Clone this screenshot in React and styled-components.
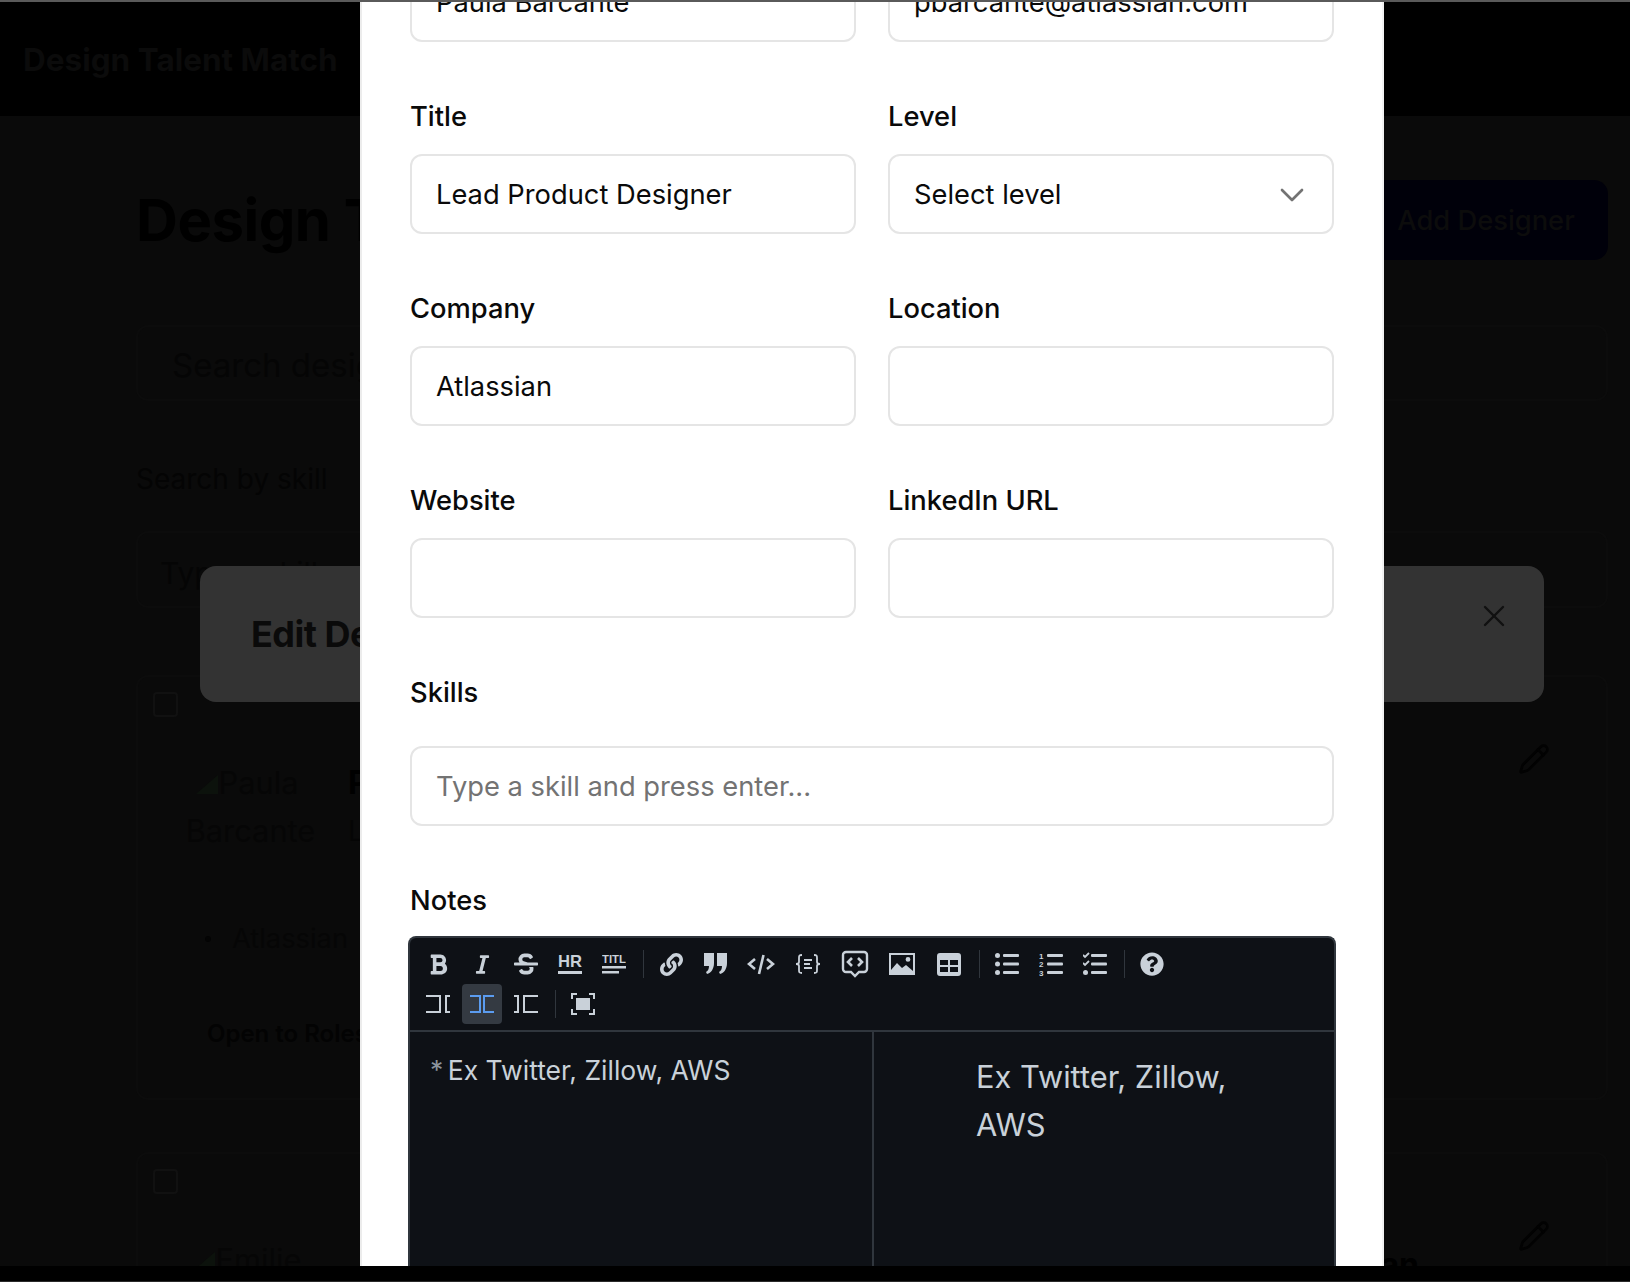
import styled, { createGlobalStyle } from "styled-components";
import { ChevronDown, Pencil, X } from "lucide-react";
import { FaBold, FaItalic, FaStrikethrough, FaLink, FaQuestionCircle } from "react-icons/fa";

const GlobalStyle = createGlobalStyle`
    * { box-sizing: border-box; }
    html, body { margin: 0; height: 100%; overflow: hidden; background: #000; }
    body { font-family: Inter, "Liberation Sans", sans-serif; }
`;

const Frame = styled.div`
    display: flex;
    flex-direction: column;
    height: 1282px;
    border-top: 2px solid #5a5a5a;
    border-bottom: 1px solid #2a2a2a;
`;

const Viewport = styled.div`
    position: relative;
    flex: 1;
    overflow: hidden;
    background: #0a0a0a;
`;

const BottomBar = styled.div`
    height: 15px;
    background: #000;
`;

const Header = styled.header`
    height: 114px;
    display: flex;
    align-items: center;
    padding: 0 23px;
    background: #000;
`;

const Brand = styled.div`
    font-size: 31.5px;
    font-weight: 700;
    color: #0b0b0b;
`;

const Main = styled.main`
    padding: 64px 22px 0 136px;
`;

const TitleRow = styled.div`
    display: flex;
    justify-content: space-between;
    align-items: center;
    height: 80px;
`;

const PageTitle = styled.h1`
    margin: 0;
    font-size: 58px;
    font-weight: 700;
    letter-spacing: -0.5px;
    color: #000;
`;

const AddButton = styled.button`
    height: 80px;
    width: 244px;
    border: 0;
    border-radius: 14px;
    font: 500 27.3px Inter, sans-serif;
    color: #0c0c0c;
    background: #00000a;
`;

const SearchBox = styled.div`
    height: 76px;
    margin-top: 65px;
    padding: 4px 0 0 34px;
    display: flex;
    align-items: center;
    border: 2px solid #0c0c0c;
    border-radius: 12px;
    font-size: 33px;
    color: #050505;
`;

const SkillLabel = styled.div`
    margin-top: 61px;
    font-size: 28px;
    line-height: 34px;
    color: #040404;
`;

const SkillBox = styled.div`
    height: 77px;
    margin-top: 35px;
    padding: 22px 0 0 22px;
    border: 2px solid #0c0c0c;
    border-radius: 12px;
    font-size: 30px;
    color: #050505;
`;

const Card = styled.section`
    position: relative;
    height: ${props => props.$height}px;
    margin-top: ${props => props.$top}px;
    padding: 15px 0 0 15px;
    border: 2px solid #0c0c0c;
    border-radius: 12px;
`;

const Checkbox = styled.div`
    width: 25px;
    height: 25px;
    border: 2px solid #111;
    border-radius: 4px;
`;

const CardBody = styled.div`
    display: flex;
    margin-top: 42px;
`;

const Avatar = styled.div`
    flex: none;
    width: 153px;
    margin-left: 21px;
    text-align: center;
    font-size: 30.8px;
    line-height: 48px;
    color: #060606;
`;

const BrokenImage = styled.svg`
    width: 24px;
    height: 24px;
    margin-left: -8px;
    vertical-align: -2px;
`;

const Person = styled.div`
    width: ${props => props.$width || "auto"};
    margin-left: 21px;
    padding-top: ${props => props.$end ? 5 : 0}px;
    text-align: ${props => props.$end ? "right" : "left"};
    font-size: 32px;
    line-height: 48px;
    font-weight: 700;
    color: #000;
`;

const PersonRole = styled.div`
    font-size: 28px;
    font-weight: 400;
    color: #050505;
`;

const Company = styled.div`
    margin: 67px 0 0 52px;
    font-size: 27.3px;
    line-height: 34px;
    color: #060606;
    display: flex;
    align-items: center;
    gap: 21px;

    &::before {
        content: "";
        width: 6px;
        height: 6px;
        border-radius: 50%;
        background: #040404;
    }
`;

const RoleTag = styled.div`
    margin: 63px 0 0 54px;
    font-size: 24px;
    line-height: 30px;
    font-weight: 600;
    color: #030303;
`;

const EditLink = styled.div`
    position: absolute;
    top: 66px;
    right: 56px;
    color: #020202;
`;

const HeaderBar = styled.div`
    position: absolute;
    top: 564px;
    left: 200px;
    width: 1344px;
    height: 136px;
    padding-left: 51px;
    display: flex;
    align-items: center;
    justify-content: space-between;
    background: #333;
    border-radius: 16px;
`;

const HeaderTitle = styled.h2`
    margin: 0;
    font-size: 36px;
    font-weight: 700;
    letter-spacing: -0.5px;
    color: #0a0a0a;
`;

const CloseButton = styled.div`
    display: flex;
    align-self: flex-start;
    margin: 32px 32px 0 0;
    color: #111;
`;

const Panel = styled.div`
    position: absolute;
    top: 0;
    bottom: 0;
    left: 360px;
    width: 1024px;
    overflow: hidden;
    padding: 0 48px;
    background: #fff;
    border-left: 2px solid #ececec;
    border-right: 2px solid #f2f2f2;
`;

/* the dialog is scrolled: this is its scroll offset */
const Form = styled.form`
    margin-top: -98px;
    display: grid;
    grid-template-columns: 446px 446px;
    column-gap: 32px;
    row-gap: 54px;
`;

const Field = styled.div`
    display: flex;
    flex-direction: column;
    grid-column: ${props => props.$wide ? "1 / -1" : "auto"};
`;

const Label = styled.label`
    height: 41px;
    margin-bottom: ${props => props.$gap || 17}px;
    font-size: 27.3px;
    line-height: 41px;
    font-weight: 500;
    color: #0a0a0a;
`;

const Input = styled.div`
    height: 80px;
    padding: 1px 24px 0;
    display: flex;
    align-items: center;
    justify-content: space-between;
    border: 2px solid #e5e5e5;
    border-radius: 12px;
    font-size: 27.3px;
    color: ${props => props.$placeholder ? "#737373" : "#0a0a0a"};
`;

const Chevron = styled(ChevronDown)`
    color: #737373;
    margin-right: -4px;
`;

const Editor = styled.div`
    margin: 0 -2px;
    height: 420px;
    background: #0e1116;
    border: 2px solid #30363d;
    border-bottom: 0;
    border-radius: 8px 8px 0 0;
    color: #c9d1d9;
`;

const Toolbar = styled.div`
    padding: 6px 8px;
    height: 94px;
    display: flex;
    flex-direction: column;
    border-bottom: 2px solid #30363d;
`;

const ToolRow = styled.div`
    display: flex;
    gap: 4px;
`;

const ToolButton = styled.div`
    width: ${props => props.$wide ? 43 : 40}px;
    height: 40px;
    display: flex;
    align-items: center;
    justify-content: center;
    border-radius: 4px;
    color: ${props => props.$active ? "#5b9cf0" : "#c9d1d9"};
    background: ${props => props.$active ? "#343a42" : "transparent"};
`;

const ToolDivider = styled.div`
    width: 1px;
    height: 28px;
    margin: 6px 3px 0 5px;
    background: #30363d;
`;

const Panes = styled.div`
    display: grid;
    grid-template-columns: 464px 1fr;
`;

const Source = styled.div`
    height: 300px;
    padding: 18px 20px;
    border-right: 2px solid #30363d;
    font-size: 26.5px;
    line-height: 40px;
`;

const Asterisk = styled.span`
    margin-right: -3px;
    color: #8b949e;
`;

const Preview = styled.ul`
    margin: 0;
    padding: 21px 70px 0 102px;
    list-style: none;
    font-size: 30.8px;
    line-height: 48px;
`;

const Glyph = ({ children, w = 24, h = 24 }) => (
    <svg width={w} height={h} viewBox={`0 0 ${w} ${h}`} fill="none" stroke="currentColor" strokeWidth="2">
        {children}
    </svg>
);

const HrIcon = () => (
    <Glyph>
        <text x="0" y="15" fontFamily="Liberation Sans" fontWeight="700" fontSize="17" textLength="24" lengthAdjust="spacingAndGlyphs" fill="currentColor" stroke="none">HR</text>
        <rect x="0" y="19" width="24" height="3" fill="currentColor" stroke="none" />
    </Glyph>
);

const TitleIcon = () => (
    <Glyph>
        <text x="0" y="11" fontFamily="Liberation Sans" fontWeight="700" fontSize="11" textLength="24" lengthAdjust="spacingAndGlyphs" fill="currentColor" stroke="none">TITL</text>
        <rect x="0" y="14" width="24" height="2.5" fill="currentColor" stroke="none" />
        <rect x="0" y="19" width="17" height="2.5" fill="currentColor" stroke="none" />
    </Glyph>
);

const QuoteIcon = () => (
    <Glyph>
        <g fill="currentColor" stroke="none">
            <path d="M1 1h10v10c0 6-3 10-7 11l-1-2c2-1 3-3 3-6H1z" />
            <path d="M14 1h10v10c0 6-3 10-7 11l-1-2c2-1 3-3 3-6h-5z" />
        </g>
    </Glyph>
);

const CodeIcon = () => (
    <Glyph w={28} h={24}>
        <path d="M8 7l-6 5 6 5M20 7l6 5-6 5" strokeWidth="2.6" />
        <path d="M16.5 3l-4.5 19" strokeWidth="2.6" />
    </Glyph>
);

const BlockIcon = () => (
    <Glyph w={26} h={24}>
        <path d="M7 3c-3 0-3 1-3 3v4c0 1-1 2-3 2 2 0 3 1 3 2v4c0 2 0 3 3 3M19 3c3 0 3 1 3 3v4c0 1 1 2 3 2-2 0-3 1-3 2v4c0 2 0 3-3 3" strokeWidth="1.8" />
        <path d="M9 8h8M9 12h6M9 16h8" strokeWidth="1.8" />
    </Glyph>
);

const CommentIcon = () => (
    <Glyph w={28} h={28}>
        <path d="M5 2h18a3 3 0 0 1 3 3v14a3 3 0 0 1-3 3h-5l-4 4-4-4H5a3 3 0 0 1-3-3V5a3 3 0 0 1 3-3z" strokeWidth="2.4" />
        <path d="M11 8l-4 4 4 4M17 8l4 4-4 4" strokeWidth="2.6" />
    </Glyph>
);

const ImageIcon = () => (
    <Glyph w={26} h={24}>
        <path fill="currentColor" stroke="none" fillRule="evenodd" d="M0 1h26v22H0zM2 3v15l6-7 5 5 4-3 7 6V3zM19 5a2.4 2.4 0 1 1 0 4.8A2.4 2.4 0 0 1 19 5z" />
    </Glyph>
);

const TableIcon = () => (
    <Glyph>
        <path fill="currentColor" stroke="none" fillRule="evenodd" d="M3 1h18a3 3 0 0 1 3 3v17a3 3 0 0 1-3 3H3a3 3 0 0 1-3-3V4a3 3 0 0 1 3-3zM3 8v5h8V8zm10 0v5h8V8zM3 15v5h8v-5zm10 0v5h8v-5z" />
    </Glyph>
);

const ListLines = () => (
    <g fill="currentColor" stroke="none">
        <rect x="8" y="2" width="16" height="3" rx="1" />
        <rect x="8" y="10.5" width="16" height="3" rx="1" />
        <rect x="8" y="19" width="16" height="3" rx="1" />
    </g>
);

const BulletIcon = () => (
    <Glyph>
        <ListLines />
        <g fill="currentColor" stroke="none">
            <circle cx="2.5" cy="3.5" r="2.5" />
            <circle cx="2.5" cy="12" r="2.5" />
            <circle cx="2.5" cy="20.5" r="2.5" />
        </g>
    </Glyph>
);

const OrderedIcon = () => (
    <Glyph>
        <ListLines />
        <g fontFamily="Liberation Sans" fontWeight="700" fontSize="8" fill="currentColor" stroke="none">
            <text x="0" y="7">1</text>
            <text x="0" y="15">2</text>
            <text x="0" y="24">3</text>
        </g>
    </Glyph>
);

const TaskIcon = () => (
    <Glyph>
        <ListLines />
        <path d="M0 3l2 2 4-4M0 11l2 2 4-4" strokeWidth="1.8" />
        <circle cx="2.5" cy="20.5" r="2.5" fill="currentColor" stroke="none" />
    </Glyph>
);

const EditModeIcon = () => (
    <Glyph>
        <path d="M0 4h14v16H0M24 4h-4v16h4" />
    </Glyph>
);

const LiveModeIcon = () => (
    <Glyph>
        <path d="M0 4h10v16H0M24 4H14v16h10" />
    </Glyph>
);

const PreviewModeIcon = () => (
    <Glyph>
        <path d="M24 4H10v16h14M0 4h4v16H0" />
    </Glyph>
);

const FullscreenIcon = () => (
    <Glyph>
        <path d="M1 7V2h5M18 2h5v5M23 17v5h-5M6 22H1v-5" strokeWidth="2" />
        <rect x="5" y="6" width="14" height="12" fill="currentColor" stroke="none" />
    </Glyph>
);

const firstRow = [
    { icon: <FaBold size={23} /> }, { icon: <FaItalic size={21} /> }, { icon: <FaStrikethrough size={24} /> },
    { icon: <HrIcon /> }, { icon: <TitleIcon /> }, null,
    { icon: <FaLink size={23} /> }, { icon: <QuoteIcon /> }, { icon: <CodeIcon />, wide: true },
    { icon: <BlockIcon />, wide: true }, { icon: <CommentIcon />, wide: true }, { icon: <ImageIcon />, wide: true },
    { icon: <TableIcon />, wide: true }, null,
    { icon: <BulletIcon /> }, { icon: <OrderedIcon /> }, { icon: <TaskIcon /> }, null,
    { icon: <FaQuestionCircle size={24} /> },
];

const fields = [
    { label: "Name", value: "Paula Barcante" },
    { label: "Email", value: "pbarcante@atlassian.com" },
    { label: "Title", value: "Lead Product Designer" },
    { label: "Level", value: "Select level", select: true },
    { label: "Company", value: "Atlassian" },
    { label: "Location", value: "" },
    { label: "Website", value: "" },
    { label: "LinkedIn URL", value: "" },
];

function Background() {
    return (
        <>
            <Header>
                <Brand>Design Talent Match</Brand>
            </Header>
            <Main>
                <TitleRow>
                    <PageTitle>Design Talent</PageTitle>
                    <AddButton>Add Designer</AddButton>
                </TitleRow>
                <SearchBox>Search designers...</SearchBox>
                <SkillLabel>Search by skill</SkillLabel>
                <SkillBox>Type a skill...</SkillBox>
                <Card $top={67} $height={425}>
                    <Checkbox />
                    <EditLink><Pencil size={32} strokeWidth={2} /></EditLink>
                    <CardBody>
                        <Avatar>
                            <BrokenImage viewBox="0 0 24 24"><path d="M1 22 23 3v19z" fill="#0c120c" /></BrokenImage>
                            Paula Barcante
                        </Avatar>
                        <Person>
                            Paula Barcante
                            <PersonRole>Lead Product Designer</PersonRole>
                        </Person>
                    </CardBody>
                    <Company>Atlassian</Company>
                    <RoleTag>Open to Roles</RoleTag>
                </Card>
                <Card $top={52} $height={400}>
                    <Checkbox />
                    <EditLink><Pencil size={32} strokeWidth={2} /></EditLink>
                    <CardBody>
                        <Avatar>
                            <BrokenImage viewBox="0 0 24 24"><path d="M1 22 23 3v19z" fill="#0c120c" /></BrokenImage>
                            Emilie
                        </Avatar>
                        <Person $width="1071px" $end>Emilie Sullivan</Person>
                    </CardBody>
                </Card>
            </Main>
        </>
    );
}

function NotesEditor() {
    return (
        <Editor>
            <Toolbar>
                <ToolRow>
                    {firstRow.map((tool, i) => tool
                        ? <ToolButton key={i} $wide={tool.wide}>{tool.icon}</ToolButton>
                        : <ToolDivider key={i} />)}
                </ToolRow>
                <ToolRow>
                    <ToolButton><EditModeIcon /></ToolButton>
                    <ToolButton $active><LiveModeIcon /></ToolButton>
                    <ToolButton><PreviewModeIcon /></ToolButton>
                    <ToolDivider />
                    <ToolButton><FullscreenIcon /></ToolButton>
                </ToolRow>
            </Toolbar>
            <Panes>
                <Source><Asterisk>*</Asterisk> Ex Twitter, Zillow, AWS</Source>
                <Preview>
                    <li>Ex Twitter, Zillow, AWS</li>
                </Preview>
            </Panes>
        </Editor>
    );
}

function App() {
    return (
        <Frame>
            <GlobalStyle />
            <Viewport>
                <Background />
                <HeaderBar>
                    <HeaderTitle>Edit Designer</HeaderTitle>
                    <CloseButton><X size={36} strokeWidth={1.6} /></CloseButton>
                </HeaderBar>
                <Panel>
                    <Form>
                        {fields.map(field => (
                            <Field key={field.label}>
                                <Label>{field.label}</Label>
                                <Input>
                                    {field.value}
                                    {field.select && <Chevron size={40} strokeWidth={1.6} />}
                                </Input>
                            </Field>
                        ))}
                        <Field $wide>
                            <Label $gap={33}>Skills</Label>
                            <Input $placeholder>Type a skill and press enter...</Input>
                        </Field>
                        <Field $wide>
                            <Label $gap={15}>Notes</Label>
                            <NotesEditor />
                        </Field>
                    </Form>
                </Panel>
            </Viewport>
            <BottomBar />
        </Frame>
    );
}

export default App;
